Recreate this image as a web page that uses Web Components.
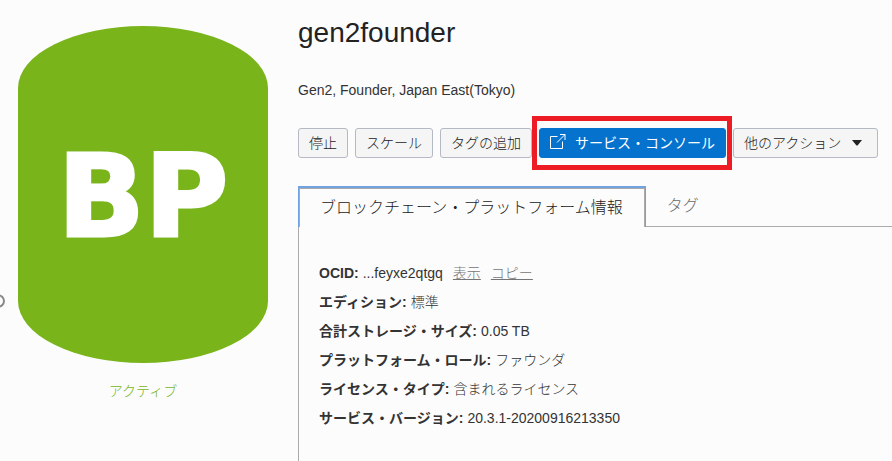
<!DOCTYPE html>
<html lang="ja">
<head>
<meta charset="utf-8">
<title>gen2founder</title>
<style>
  html { height: 100%; }
  body {
    margin: 0;
    min-height: 100%;
    display: flex;
    background: #fcfcfc;
    color: #333;
    font: 300 14px/20px "Liberation Sans", "Noto Sans CJK JP", sans-serif;
  }
</style>
</head>
<body>
<instance-page></instance-page>
<script>
const define = (name, html, setup) => {
  const template = document.createElement('template');
  template.innerHTML = html;
  customElements.define(name, class extends HTMLElement {
    constructor() {
      super();
      this.attachShadow({ mode: 'open' }).append(template.content.cloneNode(true));
    }
    connectedCallback() { if (setup) setup(this, this.shadowRoot); }
  });
};

define('instance-badge', `
  <style>
    :host { display: flex; flex-direction: column; gap: 18px; text-align: center; color: #78b41a; }
    .shape {
      display: flex; align-items: center; justify-content: center;
      height: 337px; padding-top: 4px; box-sizing: border-box; border-radius: 125px / 62px;
      background: #78b41a; color: #fff;
      font: 700 114px/136px "DejaVu Sans", sans-serif;
      -webkit-text-stroke: 3px #fff;
    }
  </style>
  <div class="shape"><span>BP</span></div>
  <div><slot></slot></div>`);

define('action-button', `
  <style>
    :host { display: block; position: relative; }
    button {
      display: flex; align-items: center; gap: 9px;
      height: 30px; padding: 0 10px; box-sizing: border-box;
      border: 1px solid #b4b9c3; border-radius: 3px;
      background: #f5f5f5; color: #222; font: inherit; white-space: nowrap; cursor: pointer;
    }
    :host([primary]) button { background: #0572ce; border-color: #0572ce; color: #fff; font-weight: 400; }
    :host([highlight])::after {
      content: ""; position: absolute; inset: -12px -6px -12px -7px;
      border: 5px solid #ed1c24; pointer-events: none;
    }
  </style>
  <button type="button"><slot name="before"></slot><span><slot></slot></span><slot name="after"></slot></button>`);

define('open-icon', `
  <style>:host, svg { display: block; }</style>
  <svg width="16" height="18" viewBox="0 0 16 18" fill="none" stroke="currentColor" aria-hidden="true">
    <path d="M7.5 2.5H.5v12h12v-7M10 .5h5V6M15 .5l-8 8"/>
  </svg>`);

define('caret-icon', `
  <style>:host { display: block; padding: 0 5px 0 2px; } svg { display: block; }</style>
  <svg width="10" height="6" viewBox="0 0 10 6" aria-hidden="true"><path d="M0 0h10L5.500 5.500h-1z" fill="#222"/></svg>`);

define('tab-bar', `
  <style>
    :host { display: flex; font-size: 16px; line-height: 24px; }
    button {
      height: 41px; padding: 0 21px; border: 0; border-bottom: 1px solid #aaa;
      background: none; font: inherit; color: #6b6b6b; white-space: nowrap; cursor: pointer;
    }
    button.on {
      border: solid #70a3df; border-width: 2px 1px 0; color: #222;
      box-shadow: inset 1px 1px #aaa, inset -1px 0 #aaa;
      padding: 0 21px;
    }
    .on span { padding-right: 1px; }
    i { flex: 1; border-bottom: 1px solid #aaa; }
  </style>
  <button type="button" role="tab" aria-selected="true" class="on"><span>ブロックチェーン・プラットフォーム情報</span></button>
  <button type="button" role="tab" aria-selected="false">タグ</button><i></i>`);

define('info-row', `
  <style>
    :host { display: flex; gap: 4px; line-height: 20px; }
    b { font-weight: 700; }
    ::slotted(a) { color: #757575; margin-left: 10px; }
  </style>
  <b></b><span><slot></slot></span>`,
  (host, root) => { root.querySelector('b').textContent = host.getAttribute('label') + ':'; });

define('instance-page', `
  <style>
    :host { display: flex; flex: 1; position: relative; overflow: hidden; }
    .ring {
      position: absolute; left: -10px; top: 294px; width: 15px; height: 14px;
      box-sizing: border-box; border: 2px solid #888; border-radius: 50%;
    }
    aside { flex: 0 0 250px; padding: 26px 30px 0 18px; }
    main { flex: 1; display: flex; flex-direction: column; min-width: 0; padding-top: 12px; }
    h1 { margin: 0; font-size: 28px; line-height: 42px; font-weight: 400; color: #222; }
    p { margin: 26px 0 28px; }
    .actions { display: flex; gap: 7px; padding-right: 14px; }
    tab-bar { margin-top: 28px; }
    .panel {
      flex: 1; display: flex; flex-direction: column; gap: 9px;
      padding: 36px 20px 32px; border-left: 1px solid #aaa;
    }
  </style>
  <div class="ring"></div>
  <aside><instance-badge>アクティブ</instance-badge></aside>
  <main>
    <h1>gen2founder</h1>
    <p>Gen2, Founder, Japan East(Tokyo)</p>
    <div class="actions">
      <action-button>停止</action-button>
      <action-button>スケール</action-button>
      <action-button>タグの追加</action-button>
      <action-button primary highlight><open-icon slot="before"></open-icon>サービス・コンソール</action-button>
      <action-button>他のアクション<caret-icon slot="after"></caret-icon></action-button>
    </div>
    <tab-bar role="tablist"></tab-bar>
    <section class="panel">
      <info-row label="OCID">...feyxe2qtgq<a href="#show">表示</a><a href="#copy">コピー</a></info-row>
      <info-row label="エディション">標準</info-row>
      <info-row label="合計ストレージ・サイズ">0.05 TB</info-row>
      <info-row label="プラットフォーム・ロール">ファウンダ</info-row>
      <info-row label="ライセンス・タイプ">含まれるライセンス</info-row>
      <info-row label="サービス・バージョン">20.3.1-20200916213350</info-row>
    </section>
  </main>`);
</script>
</body>
</html>
